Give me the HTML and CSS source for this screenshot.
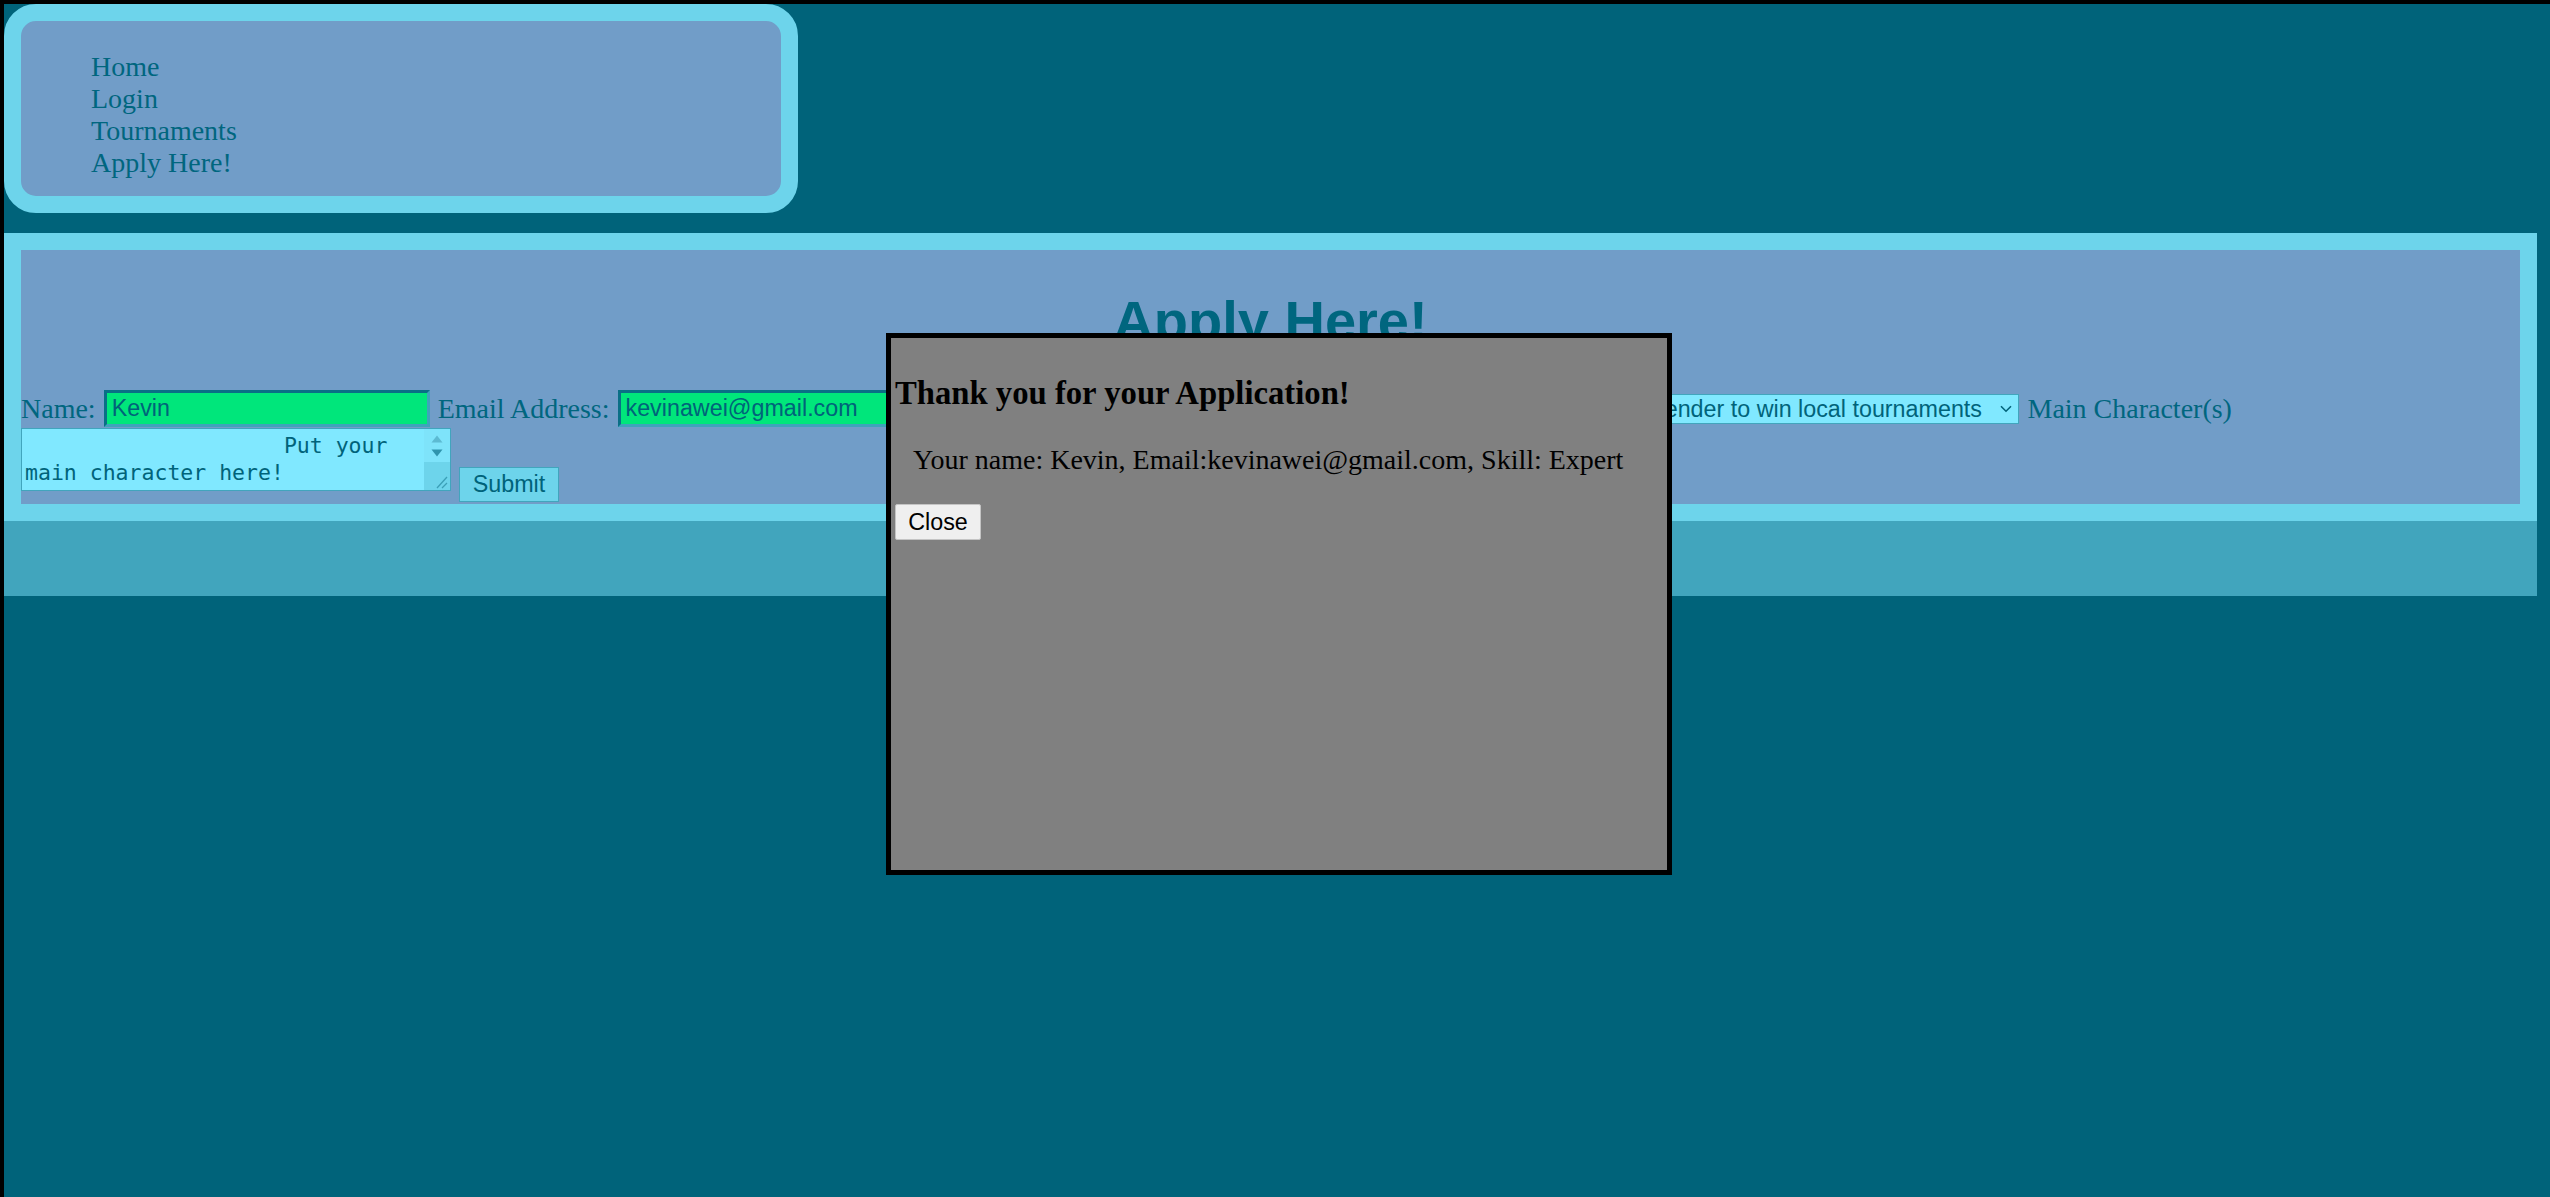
FILE: index.html
```html
<!DOCTYPE html>
<html lang="en">
<head>
<meta charset="utf-8">
<title>Apply Here!</title>
<link rel="stylesheet" href="styles.css">
</head>
<body>
<nav class="nav">
  <ul class="nav-list">
    <li><a class="nav-link" href="#">Home</a></li>
    <li><a class="nav-link" href="#">Login</a></li>
    <li><a class="nav-link" href="#">Tournaments</a></li>
    <li><a class="nav-link" href="#">Apply Here!</a></li>
  </ul>
</nav>

<div class="apply-wrap">
  <section class="apply">
    <h1 class="apply-title">Apply Here!</h1>
    <form class="apply-form">
      <div class="form-row">
        <label class="lbl">Name:</label>
        <input class="field" type="text" value="Kevin">
        <label class="lbl">Email Address:</label>
        <input class="field" type="text" value="kevinawei@gmail.com">
        <label class="lbl">Phone Number:</label>
        <input class="field" type="text" value="">
        <label class="lbl">Skill Level:</label>
        <span class="select-wrap">
          <select class="skill"><option>Contender to win local tournaments</option></select>
          <svg class="chev" viewBox="0 0 12 8" width="12" height="8"><path d="M1 1.2 L6 6.2 L11 1.2" fill="none" stroke="#00637a" stroke-width="1.6"/></svg>
        </span>
        <label class="lbl">Main Character(s)</label>
      </div>
      <div class="form-row2">
        <div class="ta-wrap">
          <textarea class="ta">                    Put your main character here!</textarea>
          <div class="ta-bar">
            <div class="ta-btns">
              <svg class="ta-arrow" viewBox="0 0 12 8" width="12" height="8"><path d="M6 0.5 L11.5 7.5 L0.5 7.5 Z" fill="#5cbad2"/></svg>
              <svg class="ta-arrow" viewBox="0 0 12 8" width="12" height="8"><path d="M0.5 0.5 L11.5 0.5 L6 7.5 Z" fill="#2f94ad"/></svg>
            </div>
            <div class="ta-corner">
              <svg viewBox="0 0 26 28" width="26" height="28"><path d="M23 15 L13 26 M23 21 L18 26" stroke="#3b9fb7" stroke-width="1.3" fill="none"/></svg>
            </div>
          </div>
        </div>
        <button class="submit" type="button">Submit</button>
      </div>
    </form>
  </section>
</div>

<div class="modal">
  <h3 class="modal-title">Thank you for your Application!</h3>
  <p class="modal-text">Your name: Kevin, Email:kevinawei@gmail.com, Skill: Expert</p>
  <button class="close-btn" type="button">Close</button>
</div>
</body>
</html>
```

FILE: styles.css
```css
html {
  background: #000;
}

body {
  margin: 4px 0 0 4px;
  min-height: calc(100vh - 4px);
  background: #00637a;
  font-family: "Liberation Serif", "Times New Roman", serif;
  color: #00667f;
}

.nav {
  width: 794px;
  height: 209px;
  box-sizing: border-box;
  border: 17px solid #6dd4eb;
  border-radius: 32px;
  background: #719dc8;
}

.nav-list {
  margin: 30px 0 0;
  padding-left: 70px;
  list-style: none;
  font-size: 28px;
}

.nav-link {
  color: #00667f;
  text-decoration: none;
}

.apply-wrap {
  margin-top: 20px;
  width: 2533px;
  background: #41a5bd;
  padding-bottom: 75px;
}

.apply {
  border: 17px solid #6dd4eb;
  background: #719dc8;
  padding-bottom: 2px;
}

.apply-title {
  margin: 37.5px 0;
  font-family: "Liberation Sans", Arial, sans-serif;
  font-weight: 700;
  font-size: 56px;
  text-align: center;
  color: #00667f;
}

.form-row {
  display: flex;
  align-items: center;
  gap: 8px;
  height: 37px;
  font-size: 28px;
  white-space: nowrap;
}

.lbl {
  color: #00667f;
}

.field {
  width: 326px;
  height: 37px;
  box-sizing: border-box;
  margin: 0;
  border: 3px solid;
  border-color: #0a6f86 #3fa3bb #3fa3bb #0a6f86;
  background: #00e67b;
  font-family: "Liberation Sans", Arial, sans-serif;
  font-size: 23.3px;
  color: #00637a;
  padding: 0 5px;
}

.select-wrap {
  position: relative;
  display: block;
}

.skill {
  appearance: none;
  -webkit-appearance: none;
  display: block;
  width: 410px;
  height: 30px;
  box-sizing: border-box;
  margin: 0;
  border: 1px solid #41a5bd;
  background: #80e8ff;
  font-family: "Liberation Sans", Arial, sans-serif;
  font-size: 23.3px;
  color: #00637a;
  padding: 0 0 0 5px;
}

.chev {
  position: absolute;
  right: 7px;
  top: 11px;
}

.form-row2 {
  display: flex;
  align-items: flex-start;
  gap: 8px;
  margin-top: 1px;
}

.ta-wrap {
  display: flex;
  width: 430px;
  height: 63px;
  box-sizing: border-box;
  border: 1px solid #41a5bd;
  background: #80e8ff;
}

.ta {
  flex: 1;
  min-width: 0;
  margin: 0;
  border: 0;
  padding: 3px 3px;
  background: transparent;
  resize: none;
  overflow: hidden;
  outline: none;
  font-family: "DejaVu Sans Mono", "Liberation Mono", monospace;
  font-size: 21.5px;
  line-height: 27px;
  color: #00637a;
}

.ta-bar {
  display: flex;
  flex-direction: column;
  width: 26px;
}

.ta-btns {
  flex: 1;
  display: flex;
  flex-direction: column;
  align-items: center;
  justify-content: center;
  gap: 6px;
  background: #7ee3fa;
}

.ta-arrow {
  display: block;
}

.ta-corner {
  height: 28px;
  background: #6dd4eb;
}

.ta-corner svg {
  display: block;
}

.submit {
  margin-top: 39px;
  width: 100px;
  height: 35px;
  box-sizing: border-box;
  padding: 0;
  border: 1px solid #41a5bd;
  background: #6dd4eb;
  font-family: "Liberation Sans", Arial, sans-serif;
  font-size: 23.3px;
  color: #00637a;
}

.modal {
  position: fixed;
  left: 886px;
  top: 333px;
  width: 786px;
  height: 542px;
  box-sizing: border-box;
  border: 5px solid #000;
  background: #808080;
  padding: 4px;
  color: #000;
  font-family: "Liberation Serif", "Times New Roman", serif;
}

.modal-title {
  margin: 32.7px 0;
  font-size: 32.7px;
  font-weight: 700;
}

.modal-text {
  margin: 28px 0;
  padding-left: 18px;
  font-size: 28px;
}

.close-btn {
  display: block;
  width: 86px;
  height: 36px;
  box-sizing: border-box;
  padding: 0;
  border: 1px solid #c4c4c4;
  border-radius: 2px;
  background: #efefef;
  font-family: "Liberation Sans", Arial, sans-serif;
  font-size: 23.3px;
  color: #000;
}
```
